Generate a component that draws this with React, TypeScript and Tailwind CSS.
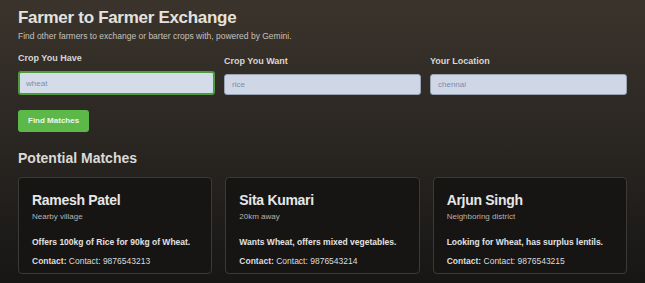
const matches = [
  {
    name: "Ramesh Patel",
    place: "Nearby village",
    offer: "Offers 100kg of Rice for 90kg of Wheat.",
    phone: "Contact: 9876543213",
  },
  {
    name: "Sita Kumari",
    place: "20km away",
    offer: "Wants Wheat, offers mixed vegetables.",
    phone: "Contact: 9876543214",
  },
  {
    name: "Arjun Singh",
    place: "Neighboring district",
    offer: "Looking for Wheat, has surplus lentils.",
    phone: "Contact: 9876543215",
  },
];

function Field({ label, value, focused }: { label: string; value: string; focused?: boolean }) {
  return (
    <div className="flex flex-col gap-[6px]">
      <label className="text-[9px] font-bold text-[#d8d6d2]">{label}</label>
      <input
        readOnly
        placeholder={value}
        className={
          focused
            ? "h-[24px] w-full rounded-[3px] border-2 border-[#4f9a3c] bg-[#d4dcea] px-[6px] text-[8px] text-[#6f7f9e] placeholder:text-[#7d8cab] outline-none"
            : "h-[21px] w-full rounded-[3px] border border-[#9aa3b3] bg-[#cfd7e6] px-[7px] text-[8px] text-[#6f7f9e] placeholder:text-[#7d8cab] outline-none"
        }
      />
    </div>
  );
}

export default function App() {
  return (
    <div
      className="h-[283px] w-[645px] overflow-hidden bg-gradient-to-b from-[#3b342c] via-[#2a2622] to-[#171615] px-[18px] pt-[7px]"
      style={{ fontFamily: '"Liberation Sans", Arial, sans-serif' }}
    >
      <h1 className="text-[17px] font-bold leading-[22px] tracking-[-0.3px] text-[#e4e2de]">
        Farmer to Farmer Exchange
      </h1>
      <p className="mt-[1px] text-[8.5px] text-[#c4c1bb]">
        Find other farmers to exchange or barter crops with, powered by Gemini.
      </p>

      <div className="mt-[9px] grid grid-cols-3 items-end gap-[9px]">
        <Field label="Crop You Have" value="wheat" focused />
        <Field label="Crop You Want" value="rice" />
        <Field label="Your Location" value="chennai" />
      </div>

      <button className="mt-[15px] h-[22px] rounded-[3px] bg-[#5db84a] px-[10px] text-[8px] font-bold text-[#eef7ea]">
        Find Matches
      </button>

      <h2 className="mt-[16px] text-[14px] font-bold text-[#dcdad6]">Potential Matches</h2>

      <div className="mt-[8px] grid grid-cols-3 gap-[13px]">
        {matches.map((m) => (
          <div
            key={m.name}
            className="flex h-[97px] flex-col rounded-[4px] border border-[#3c3a37] bg-[#161514] px-[13px] pt-[14px]"
          >
            <div className="text-[14px] font-bold leading-[16px] tracking-[-0.3px] text-[#e6e6e6]">{m.name}</div>
            <div className="mt-[3px] text-[8px] text-[#b5b3af]">{m.place}</div>
            <div className="mt-[13px] text-[8.5px] font-bold text-[#e2e2e2]">{m.offer}</div>
            <div className="mt-[6px] text-[8.5px] text-[#dcdcdc]">
              <span className="font-bold">Contact:</span> {m.phone}
            </div>
          </div>
        ))}
      </div>
    </div>
  );
}
